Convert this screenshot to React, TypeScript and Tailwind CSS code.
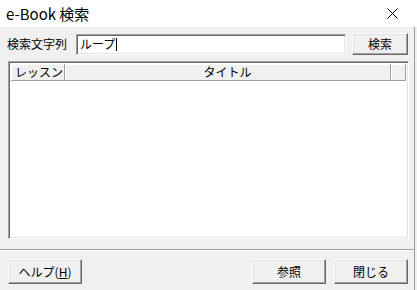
import React from "react";

const font = { fontFamily: '"Noto Sans CJK JP", "Noto Sans", sans-serif' };

const sunken =
  "border border-t-[#a0a0a0] border-l-[#a0a0a0] border-r-white border-b-white shadow-[inset_1px_1px_0_#696969,inset_-1px_-1px_0_#e3e3e3]";
const raised =
  "border border-t-white border-l-white border-r-[#696969] border-b-[#696969] shadow-[inset_-1px_-1px_0_#a0a0a0,inset_1px_1px_0_#e3e3e3] bg-[#f0f0f0]";

const Btn = ({ children, className }: { children: React.ReactNode; className: string }) => (
  <button className={`${raised} ${className} flex items-center justify-center text-[12px] text-black leading-none`}>
    {children}
  </button>
);

const HeaderCell = ({ children, className }: { children?: React.ReactNode; className: string }) => (
  <div
    className={`${className} h-[17px] border-r border-r-[#a0a0a0] border-b border-b-[#a0a0a0] shadow-[inset_1px_1px_0_#fff] flex items-center text-[12px] leading-none text-black`}
  >
    {children}
  </div>
);

const App = () => {
  return (
    <div className="w-[417px] h-[290px] bg-[#f0f0f0] flex flex-col overflow-hidden" style={font}>
      <div className="h-[27px] bg-white flex items-center justify-between pl-[6px] pr-[19px] shrink-0">
        <span className="text-[15px] text-black leading-none">e-Book 検索</span>
        <svg width="11" height="11" viewBox="0 0 11 11">
          <path d="M0.5 0.5 L10.5 10.5 M10.5 0.5 L0.5 10.5" stroke="#000" strokeWidth="1" />
        </svg>
      </div>
      <div className="flex-1 flex flex-col w-[415px] border-r border-r-[#9a9a9a]">
        <div className="flex items-center h-[22px] mt-[6px]">
          <span className="ml-[7px] w-[69px] text-[12px] leading-none text-black">検索文字列</span>
          <div className={`${sunken} w-[270px] h-[21px] bg-white flex items-center pl-[3px] text-[12px] leading-none text-black`}>
            ループ<span className="w-px h-[13px] bg-black ml-px" />
          </div>
          <Btn className="ml-[6px] w-[56px] h-[22px]">検索</Btn>
        </div>
        <div className={`${sunken} ml-[8px] mt-[6px] w-[401px] h-[178px] bg-white p-[2px]`}>
          <div className="flex bg-[#f0f0f0]">
            <HeaderCell className="w-[54px] pl-[4px]">レッスン</HeaderCell>
            <HeaderCell className="w-[326px] justify-center">タイトル</HeaderCell>
            <HeaderCell className="flex-1" />
          </div>
        </div>
        <div className="mt-[10px] h-[2px] border-t border-t-[#a0a0a0] border-b border-b-white" />
        <div className="flex items-center mt-[8px] h-[25px]">
          <Btn className="ml-[8px] w-[74px] h-[25px]">
            ヘルプ(<span className="underline">H</span>)
          </Btn>
          <Btn className="ml-auto w-[74px] h-[25px]">参照</Btn>
          <Btn className="ml-[8px] mr-[6px] w-[74px] h-[25px]">閉じる</Btn>
        </div>
      </div>
    </div>
  );
};

export default App;
